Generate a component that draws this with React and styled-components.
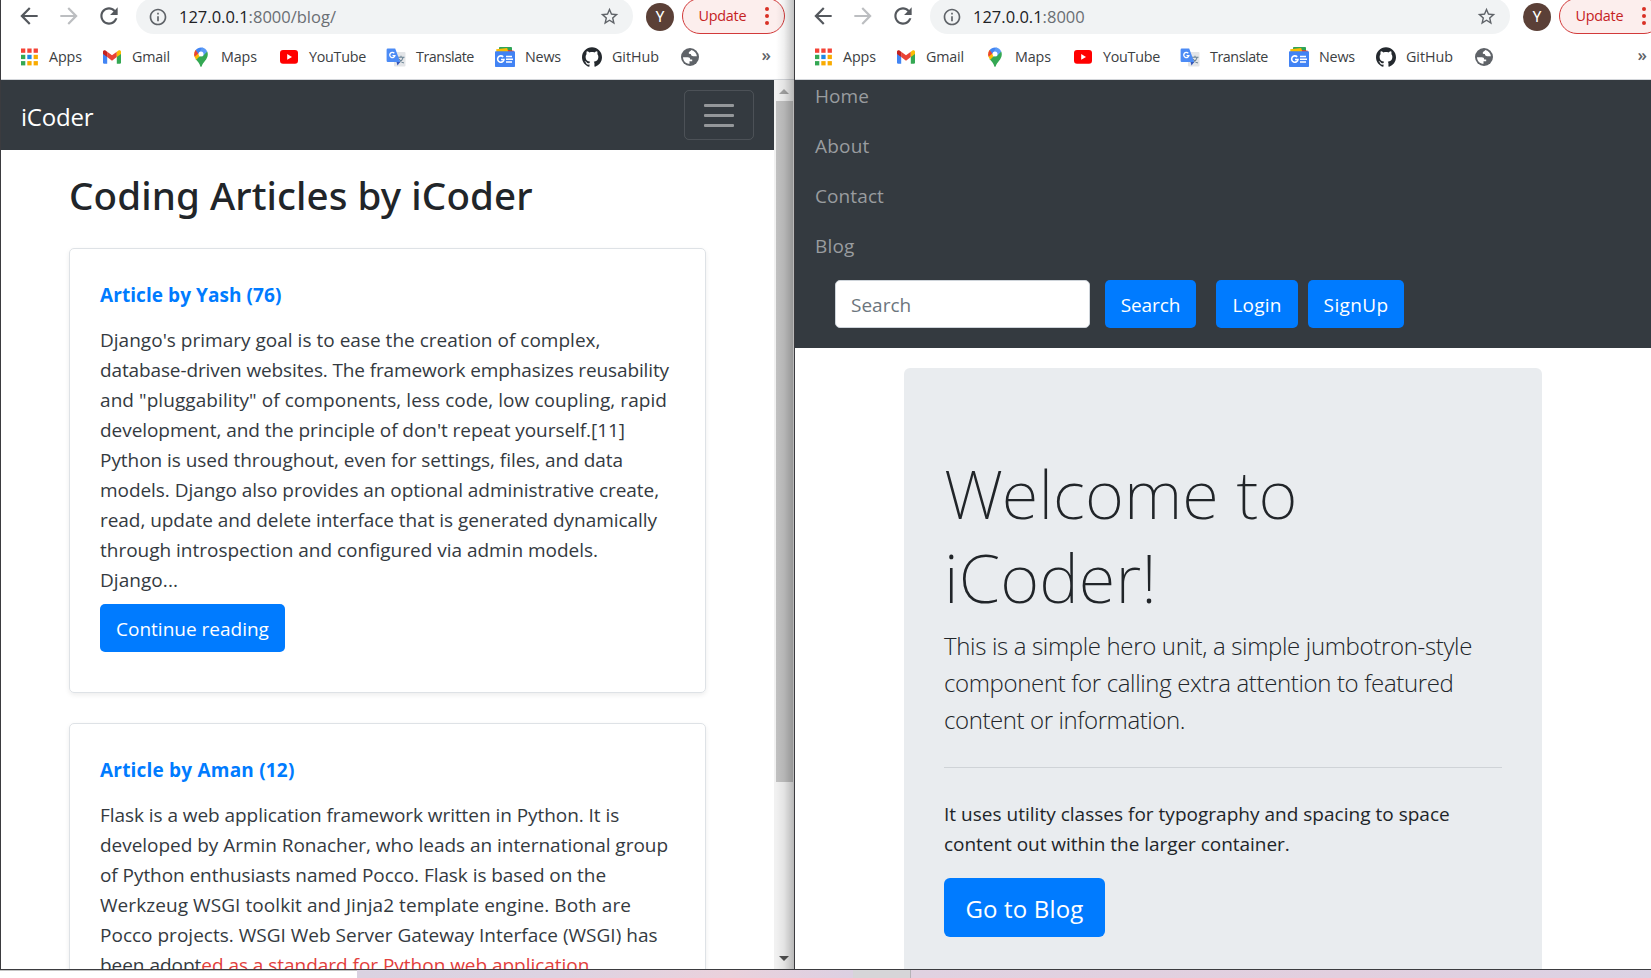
import React from "react";
import styled, { createGlobalStyle } from "styled-components";

const Global = createGlobalStyle`
  *, *::before, *::after { box-sizing: border-box; }
  body {
    margin: 0;
    background: #fff;
    font-family: "Open Sans", "Noto Sans", sans-serif;
    color: #212529;
    overflow: hidden;
  }
  h1, h2, p { margin: 0; }
`;

const Desktop = styled.div`
  display: grid;
  grid-template: 970px 8px / 795px 856px;
  width: 1651px;
  height: 978px;
  overflow: hidden;
`;

const Window = styled.section`
  position: relative;
  display: flex;
  flex-direction: column;
  min-width: 0;
  overflow: hidden;
  background: #fff;
  border: solid #3b3b3f;
  border-width: ${(p) => (p.$framed ? "0 1px 1px 1px" : "0 0 1px 0")};
`;

const EdgeShadow = styled.div`
  position: absolute;
  inset: 0 0 0 auto;
  width: 18px;
  background: linear-gradient(to right, rgba(0, 0, 0, 0), rgba(0, 0, 0, 0.06) 45%, rgba(0, 0, 0, 0.24));
  pointer-events: none;
`;

/* ---------- browser chrome ---------- */

const Chrome = styled.header`
  flex: none;
  height: 80px;
  border-bottom: 1px solid #d3d6da;
  overflow: hidden;
`;

const NavBarRow = styled.div`
  display: flex;
  align-items: center;
  height: 32px;
  width: ${(p) => p.$width}px;
  padding-left: 14.5px;
  color: #5f6368;
`;

const NavButton = styled.span`
  display: flex;
  width: 26px;
  height: 26px;
  margin-right: 14px;
  color: ${(p) => (p.$muted ? "#bcbec1" : "#54585d")};
`;

const AddressBar = styled.div`
  flex: 1;
  display: flex;
  align-items: center;
  height: 36px;
  margin: -2px 13px -2px 0.5px;
  padding: 1px 13px 0 12px;
  border-radius: 18px;
  background: #f1f3f4;
`;

const Url = styled.span`
  flex: 1;
  margin-left: 11px;
  padding-top: 1px;
  font-size: 16.5px;
  line-height: 34px;
  color: #6a6e73;
  b { font-weight: 400; color: #202124; }
`;

const Avatar = styled.span`
  display: grid;
  place-items: center;
  width: 28px;
  height: 28px;
  margin: 2px 8px 0 0;
  border-radius: 50%;
  background: #5b4037;
  color: #fff;
  font: 400 15px/28px Roboto, sans-serif;
`;

const UpdatePill = styled.span`
  display: flex;
  align-items: center;
  justify-content: space-between;
  width: 103px;
  height: 36px;
  padding: 0 15px 2px 15.5px;
  border: 1.5px solid #d23a3a;
  border-radius: 18px;
  background: #fceeed;
  color: #c5221f;
  font-size: 14.4px;
  letter-spacing: -0.25px;
`;

const Dots = styled.span`
  display: grid;
  gap: 2.6px;
  margin-top: 2px;
  i { width: 4px; height: 4px; border-radius: 50%; background: #d93025; }
`;

const BookmarkRow = styled.nav`
  display: flex;
  align-items: center;
  height: 47px;
  padding: 3px ${(p) => p.$endPadding}px 0 18px;
`;

const Bookmark = styled.span`
  display: flex;
  align-items: center;
  gap: 10px;
  margin-right: 20px;
`;

const BookmarkIcon = styled.svg`
  flex: none;
  width: 20px;
  height: 20px;
`;

const BookmarkLabel = styled.span`
  width: ${(p) => p.$width}px;
  margin-top: -1px;
  font-size: 14.3px;
  line-height: 20px;
  letter-spacing: ${(p) => p.$tracking}px;
  white-space: nowrap;
  color: #3c4043;
`;

const More = styled.span`
  margin: -5px 0 0 auto;
  font-size: 17px;
  font-weight: 600;
  color: #5f6368;
`;

/* ---------- web pages ---------- */

const Viewport = styled.div`
  flex: 1;
  display: flex;
  min-height: 0;
  overflow: hidden;
`;

const Page = styled.main`
  flex: 1;
  min-width: 0;
  overflow: hidden;
`;

const TopBar = styled.div`
  display: flex;
  align-items: center;
  justify-content: space-between;
  height: 70px;
  padding: 0 20px 0 20px;
  background: #343a40;
`;

const Brand = styled.span`
  font-size: 24px;
  letter-spacing: -0.2px;
  line-height: 36px;
  padding-top: 3px;
  color: #fff;
`;

const Toggler = styled.span`
  display: flex;
  flex-direction: column;
  align-items: center;
  justify-content: center;
  gap: 7px;
  width: 70px;
  height: 50px;
  padding-top: 1px;
  border: 1px solid rgba(255, 255, 255, 0.12);
  border-radius: 5px;
  i { width: 30px; height: 3px; border-radius: 1px; background: #94979a; }
`;

const Articles = styled.div`
  width: 637px;
  margin-left: 68px;
  padding: 21px 0 0;
`;

const PageTitle = styled.h1`
  height: 48px;
  margin-bottom: 29px;
  font-family: "Noto Sans", sans-serif;
  font-size: 38.5px;
  font-weight: 500;
  line-height: 48px;
  letter-spacing: 0.1px;
  white-space: nowrap;
`;

const Card = styled.article`
  height: ${(p) => p.$height}px;
  margin-bottom: 30px;
  padding: 31px 30px 0;
  border: 1px solid #dee2e6;
  border-radius: 5px;
  box-shadow: 0 2px 5px rgba(0, 0, 0, 0.075);
`;

const Byline = styled.h2`
  font-size: 19px;
  line-height: 30px;
  letter-spacing: ${(p) => p.$tracking}px;
  margin-bottom: 15px;
  color: #007bff;
`;

const Copy = styled.p`
  font-size: 19px;
  line-height: 30px;
  color: ${(p) => (p.$strong ? "#212529" : "#343a3f")};
`;

const Line = styled.span`
  display: block;
  white-space: nowrap;
  letter-spacing: ${(p) => p.$tracking || 0}px;
`;

const Marked = styled.span`
  color: #e2403c;
`;

const Button = styled.a`
  display: inline-flex;
  align-items: center;
  justify-content: center;
  width: ${(p) => p.$width}px;
  height: ${(p) => (p.$large ? 59 : 48)}px;
  padding-top: 2px;
  border-radius: ${(p) => (p.$large ? 6 : 5)}px;
  background: #007bff;
  color: #fff;
  font-size: ${(p) => (p.$large ? 24 : 19)}px;
  letter-spacing: ${(p) => p.$tracking || 0}px;
  white-space: nowrap;
`;

const CardAction = styled.div`
  display: flex;
  padding-top: 9px;
`;

const Scrollbar = styled.div`
  flex: none;
  display: flex;
  flex-direction: column;
  align-items: center;
  width: 20px;
  background: #f1f1f1;
`;

const Arrow = styled.i`
  width: 0;
  height: 0;
  margin: ${(p) => (p.$down ? "auto 0 8px" : "9px 0 7px")};
  border: 5px solid transparent;
  border-width: ${(p) => (p.$down ? "5px 5px 0" : "0 5px 5px")};
  border-top-color: #505050;
  border-bottom-color: #a3a3a3;
`;

const Thumb = styled.i`
  width: 17px;
  height: 681px;
  margin-left: 1px;
  background: #c1c1c1;
`;

const OpenMenu = styled.div`
  height: 268px;
  padding: 0 20px;
  background: #343a40;
`;

const MenuLink = styled.span`
  display: block;
  height: 50px;
  font-size: 19px;
  line-height: 32px;
  letter-spacing: ${(p) => p.$tracking}px;
  color: #999c9f;
`;

const MenuForm = styled.div`
  display: flex;
  padding-left: 20px;
`;

const SearchField = styled.span`
  width: 255px;
  height: 48px;
  margin-right: 15px;
  padding: 1px 15px 0;
  border: 1px solid #ced4da;
  border-radius: 5px;
  background: #fff;
  color: #6c757d;
  font-size: 19px;
  line-height: 47px;
`;

const Gap = styled.span`
  width: ${(p) => p.$size}px;
`;

const Hero = styled.div`
  width: 638px;
  height: 700px;
  margin: 20px 0 0 109px;
  padding: 83px 40px 0;
  border-radius: 6px;
  background: #e9ecef;
`;

const HeroTitle = styled.h1`
  font-family: "Noto Sans", sans-serif;
  font-size: 67px;
  font-weight: 200;
  line-height: 84px;
  margin-bottom: 8px;
  white-space: nowrap;
`;

const Lead = styled.p`
  font-size: 24px;
  font-weight: 300;
  line-height: 37px;
`;

const Rule = styled.div`
  height: 1px;
  margin: 29px 0 31px;
  background: #cfd3d7;
`;

const HeroAction = styled.div`
  display: flex;
  padding-top: 19px;
`;

const Strip = styled.div`
  grid-column: 1 / -1;
  display: grid;
  grid-template-columns: 357px 496px 58px 1fr;
  i:nth-child(1) { background: #fff; border-top: 1px solid #c4c4c4; }
  i:nth-child(2) { background: linear-gradient(to right, #dad2e1, #ddd3e2 40%, #ead1dc 75%, #dcd0e2); }
  i:nth-child(3) { background: #d6d5d8; border-right: 1px solid #b5b3b7; }
  i:nth-child(4) { background: linear-gradient(to right, #e0d2e1, #e2cfdf 60%, #dbd2e4); }
`;

/* ---------- icons ---------- */

const Glyph = ({ d, size = 26 }) => (
  <svg width={size} height={size} viewBox="0 0 24 24" fill="currentColor">
    <path d={d} />
  </svg>
);

const BACK = "M20 11H7.83l5.59-5.59L12 4l-8 8 8 8 1.41-1.41L7.83 13H20v-2z";
const FORWARD = "M12 4l-1.41 1.41L16.17 11H4v2h12.17l-5.58 5.59L12 20l8-8z";
const RELOAD =
  "M17.65 6.35C16.2 4.9 14.21 4 12 4c-4.42 0-7.99 3.58-7.99 8s3.57 8 7.99 8c3.73 0 6.84-2.55 7.73-6h-2.08c-.82 2.33-3.04 4-5.65 4-3.31 0-6-2.69-6-6s2.69-6 6-6c1.66 0 3.14.69 4.22 1.78L13 11h7V4l-2.35 2.35z";
const INFO =
  "M11 7h2v2h-2zm0 4h2v6h-2zm1-9C6.48 2 2 6.48 2 12s4.48 10 10 10 10-4.48 10-10S17.52 2 12 2zm0 18c-4.41 0-8-3.59-8-8s3.59-8 8-8 8 3.59 8 8-3.59 8-8 8z";
const STAR =
  "M22 9.24l-7.19-.62L12 2 9.19 8.63 2 9.24l5.46 4.73L5.82 21 12 17.27 18.18 21l-1.63-7.03L22 9.24zM12 15.4l-3.76 2.27 1-4.28-3.32-2.88 4.38-.38L12 6.1l1.71 4.04 4.38.38-3.32 2.88 1 4.28L12 15.4z";
const GITHUB =
  "M12 .297c-6.63 0-12 5.373-12 12 0 5.303 3.438 9.8 8.205 11.385.6.113.82-.258.82-.577 0-.285-.01-1.04-.015-2.04-3.338.724-4.042-1.61-4.042-1.61C4.422 18.07 3.633 17.7 3.633 17.7c-1.087-.744.084-.729.084-.729 1.205.084 1.838 1.236 1.838 1.236 1.07 1.835 2.809 1.305 3.495.998.108-.776.417-1.305.76-1.605-2.665-.3-5.466-1.332-5.466-5.93 0-1.31.465-2.38 1.235-3.22-.135-.303-.54-1.523.105-3.176 0 0 1.005-.322 3.3 1.23.96-.267 1.98-.399 3-.405 1.02.006 2.04.138 3 .405 2.28-1.552 3.285-1.23 3.285-1.23.645 1.653.24 2.873.12 3.176.765.84 1.23 1.91 1.23 3.22 0 4.61-2.805 5.625-5.475 5.92.42.36.81 1.096.81 2.22 0 1.606-.015 2.896-.015 3.286 0 .315.21.69.825.57C20.565 22.092 24 17.592 24 12.297c0-6.627-5.373-12-12-12";

const APP_COLORS = ["#f44336", "#f44336", "#f44336", "#34a853", "#1e88e5", "#f9ab00", "#34a853", "#f9ab00", "#f9ab00"];

const icons = {
  apps: APP_COLORS.map((fill, i) => (
    <rect key={i} x={2 + (i % 3) * 6.3} y={1.5 + Math.floor(i / 3) * 6.3} width="4.3" height="4.3" fill={fill} />
  )),
  gmail: (
    <g>
      <path d="M1 5V15.500a1.2 1.2 0 0 0 1.2 1.2h3V8.500z" fill="#4285f4" />
      <path d="M19 5V15.500a1.2 1.2 0 0 1-1.2 1.2h-3V8.500z" fill="#34a853" />
      <path d="M5.2 4.700v5.4L10 13.700l4.8-3.6V4.700L10 8.300z" fill="#ea4335" />
      <path d="M1 4.700v2.3l4.2 3.1V4.700l-1.4-1C2.6 2.800 1 3.500 1 4.700z" fill="#c5221f" />
      <path d="M19 4.700v2.3l-4.200 3.1V4.700l1.4-1C17.4 2.800 19 3.500 19 4.700z" fill="#fbbc04" />
    </g>
  ),
  maps: (
    <g>
      <path d="M4.4 12C6.800 14.600 8.600 16.300 9.300 19.200q.7 1.400 1.400 0C11.600 15.500 16.800 12.500 16.800 7.200q0-1.500-.6-2.800z" fill="#34a853" />
      <path d="M4.700 2.900Q3.200 4.700 3.200 7.200c0 2 .8 3.800 2.200 5.600L12.500 4.600z" fill="#fbbc04" />
      <path d="M4.700 2.900Q3.200 4.700 3.200 7.200c0 1 .2 1.800.5 2.600L9 5z" fill="#ea4335" />
      <path d="M4.700 2.900C6 1.300 7.800.4 10 .4c1 0 1.900.2 2.600.5L7.500 7z" fill="#4285f4" />
      <path d="M11 .5c2.400.4 4.300 1.900 5.200 3.900L11.500 9.600 7.500 7z" fill="#5b9bf6" />
      <circle cx="10" cy="7" r="2.500" fill="#fff" />
    </g>
  ),
  youtube: (
    <g>
      <rect x="1" y="3.100" width="18" height="13.600" rx="3" fill="#f00" />
      <path d="M8.200 7.100v5.600l4.800-2.800z" fill="#fff" />
    </g>
  ),
  translate: (
    <g>
      <rect x="8" y="5" width="11.500" height="14.500" rx="1" fill="#e3e5e8" />
      <path d="M11.500 10.300h7M15 8.800v1.500M17.200 10.300q-1 3.500-4.200 5.300M13 12q1.500 2.800 4.800 4" fill="none" stroke="#6c8494" strokeWidth="1.100" />
      <path d="M10.500 15h3.600l-2.600 3.500z" fill="#3556b8" />
      <path d="M1.800 1.500h7.400l5 13.500H1.800a1.200 1.200 0 0 1-1.200-1.200V2.700a1.200 1.200 0 0 1 1.200-1.200z" fill="#4c8bf5" />
      <path d="M8.300 6.300a2.600 2.600 0 1 0 .6 2.300H6.500" fill="none" stroke="#fff" strokeWidth="1.300" />
    </g>
  ),
  news: (
    <g>
      <rect x="4" y="0" width="13" height="6" rx=".8" fill="#2fa556" />
      <path d="M10 2.500l8.800 1.200v3H9z" fill="#ea3b30" />
      <path d="M1.200 2.200l11-1.200 1.200 4.500H1.500z" fill="#fbbc04" />
      <rect x="0" y="4.200" width="20" height="15.800" rx=".8" fill="#4283f4" />
      <path d="M8.200 9.900a3.200 3.200 0 1 0 .8 2.600H6" fill="none" stroke="#fff" strokeWidth="1.600" />
      <path d="M11 9.500h6M11 12.300h7M11 15.100h6" stroke="#fff" strokeWidth="1.500" />
    </g>
  ),
  github: (
    <g transform="scale(.8333)">
      <path d={GITHUB} fill="#24292e" />
    </g>
  ),
  globe: (
    <g>
      <circle cx="10" cy="10" r="9" fill="#5f6368" />
      <path
        d="M3 10.200h4.800c1.500 0 2.400.8 2.400 2.200h2v1.800h-2.700v2.500C6 16.700 3 14 3 10.200zM11.200 3c-.4 1.500-1.800 1.200-2.400 2.400-.5 1.300.8 1.700 2 1.700.3 1.700 1.400 2.400 3 2.200h3.100C16.600 6 14.300 3.600 11.200 3z"
        fill="#fff"
      />
    </g>
  ),
};

const BOOKMARKS = [
  ["apps", "Apps", 33, -0.09],
  ["gmail", "Gmail", 39, -0.16],
  ["maps", "Maps", 38, -0.09],
  ["youtube", "YouTube", 57, -0.25],
  ["translate", "Translate", 59, -0.44],
  ["news", "News", 37, -0.17],
  ["github", "GitHub", 48, -0.03],
];

function BrowserChrome({ path, width, endPadding }) {
  return (
    <Chrome>
      <NavBarRow $width={width}>
        <NavButton><Glyph d={BACK} /></NavButton>
        <NavButton $muted><Glyph d={FORWARD} /></NavButton>
        <NavButton><Glyph d={RELOAD} /></NavButton>
        <AddressBar>
          <Glyph d={INFO} size={20} />
          <Url><b>127.0.0.1</b>:8000{path}</Url>
          <Glyph d={STAR} size={21} />
        </AddressBar>
        <Avatar>Y</Avatar>
        <UpdatePill>
          Update
          <Dots><i /><i /><i /></Dots>
        </UpdatePill>
      </NavBarRow>
      <BookmarkRow $endPadding={endPadding}>
        {BOOKMARKS.map(([icon, label, w, tracking]) => (
          <Bookmark key={icon}>
            <BookmarkIcon viewBox="0 0 20 20">{icons[icon]}</BookmarkIcon>
            <BookmarkLabel $width={w} $tracking={tracking}>{label}</BookmarkLabel>
          </Bookmark>
        ))}
        <BookmarkIcon viewBox="0 0 20 20">{icons.globe}</BookmarkIcon>
        <More>»</More>
      </BookmarkRow>
    </Chrome>
  );
}

const DJANGO = [
  ["Django's primary goal is to ease the creation of complex,", 0.015],
  ["database-driven websites. The framework emphasizes reusability", -0.126],
  ['and "pluggability" of components, less code, low coupling, rapid', 0.068],
  ["development, and the principle of don't repeat yourself.[11]", -0.053],
  ["Python is used throughout, even for settings, files, and data", -0.046],
  ["models. Django also provides an optional administrative create,", -0.05],
  ["read, update and delete interface that is generated dynamically", -0.05],
  ["through introspection and configured via admin models.", -0.015],
  ["Django...", 0.05],
];

const FLASK = [
  ["Flask is a web application framework written in Python. It is", -0.055],
  ["developed by Armin Ronacher, who leads an international group", -0.031],
  ["of Python enthusiasts named Pocco. Flask is based on the", -0.066],
  ["Werkzeug WSGI toolkit and Jinja2 template engine. Both are", 0.069],
  ["Pocco projects. WSGI Web Server Gateway Interface (WSGI) has", 0.01],
];

const lines = (rows) => rows.map(([text, tracking]) => <Line key={text} $tracking={tracking}>{text}</Line>);

function BlogPage() {
  return (
    <Page>
      <TopBar>
        <Brand>iCoder</Brand>
        <Toggler><i /><i /><i /></Toggler>
      </TopBar>
      <Articles>
        <PageTitle>Coding Articles by iCoder</PageTitle>
        <Card $height={445}>
          <Byline $tracking={0.07}>Article by Yash (76)</Byline>
          <Copy>{lines(DJANGO)}</Copy>
          <CardAction><Button $width={185}>Continue reading</Button></CardAction>
        </Card>
        <Card $height={445}>
          <Byline $tracking={0.2}>Article by Aman (12)</Byline>
          <Copy>
            {lines(FLASK)}
            <Line $tracking={-0.03}>
              been adopt<Marked>ed as a standard for Python web application</Marked>
            </Line>
          </Copy>
        </Card>
      </Articles>
    </Page>
  );
}

function HomePage() {
  return (
    <Page>
      <OpenMenu>
        <MenuLink $tracking={0.08}>Home</MenuLink>
        <MenuLink $tracking={0.2}>About</MenuLink>
        <MenuLink $tracking={0.1}>Contact</MenuLink>
        <MenuLink $tracking={0.2}>Blog</MenuLink>
        <MenuForm>
          <SearchField>Search</SearchField>
          <Button $width={91} $tracking={-0.1}>Search</Button>
          <Gap $size={20} />
          <Button $width={82} $tracking={0.18}>Login</Button>
          <Gap $size={10} />
          <Button $width={96} $tracking={0.35}>SignUp</Button>
        </MenuForm>
      </OpenMenu>
      <Hero>
        <HeroTitle>
          <Line $tracking={0.1}>Welcome to</Line>
          <Line $tracking={0.1}>iCoder!</Line>
        </HeroTitle>
        <Lead>
          <Line $tracking={-0.34}>This is a simple hero unit, a simple jumbotron-style</Line>
          <Line $tracking={-0.355}>component for calling extra attention to featured</Line>
          <Line $tracking={-0.41}>content or information.</Line>
        </Lead>
        <Rule />
        <Copy $strong>
          <Line $tracking={0.015}>It uses utility classes for typography and spacing to space</Line>
          <Line $tracking={-0.04}>content out within the larger container.</Line>
        </Copy>
        <HeroAction><Button $large $width={161} $tracking={0.16}>Go to Blog</Button></HeroAction>
      </Hero>
    </Page>
  );
}

export default function App() {
  return (
    <Desktop>
      <Global />
      <Window $framed>
        <BrowserChrome path="/blog/" width={784} endPadding={23} />
        <Viewport>
          <BlogPage />
          <Scrollbar><Arrow /><Thumb /><Arrow $down /></Scrollbar>
        </Viewport>
        <EdgeShadow />
      </Window>
      <Window>
        <BrowserChrome path="" width={867} endPadding={4} />
        <Viewport><HomePage /></Viewport>
      </Window>
      <Strip><i /><i /><i /><i /></Strip>
    </Desktop>
  );
}
